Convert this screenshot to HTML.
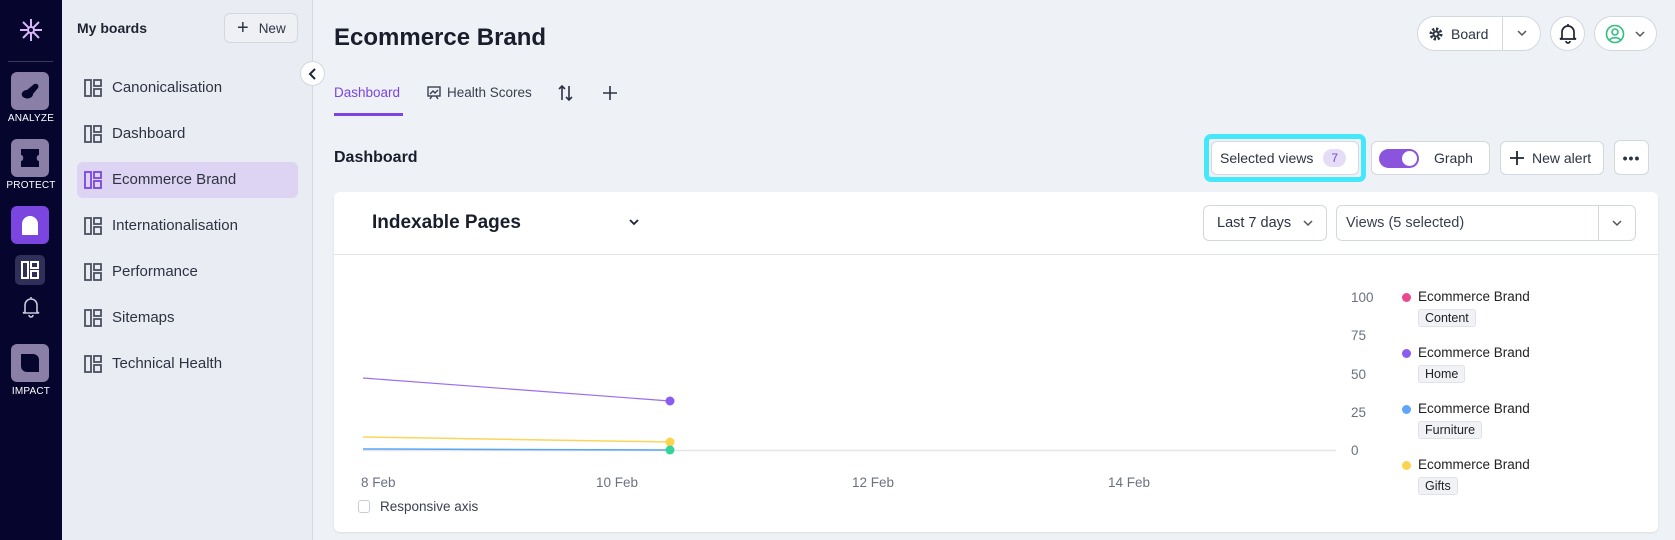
<!DOCTYPE html>
<html><head><meta charset="utf-8"><style>
*{box-sizing:border-box;margin:0;padding:0}
body{width:1675px;height:540px;overflow:hidden;background:#eef1f6;font-family:"Liberation Sans",sans-serif;color:#1f2433;position:relative}
.a{position:absolute}
.nav{left:0;top:0;width:62px;height:540px;background:#05052e}
.nb{position:absolute;left:11px;width:38px;height:38px;border-radius:6px;background:#8a7fa6}
.nl{position:absolute;left:0;width:62px;text-align:center;color:#fff;font-size:10px;letter-spacing:.2px}
.side{left:62px;top:0;width:251px;height:540px;background:#e9ecf2;border-right:1px solid #d5d9e2}
.item{position:absolute;left:15px;width:221px;height:36px;border-radius:6px;font-size:15px;color:#2d3342;line-height:36px;padding-left:35px}
.item svg{position:absolute;left:7px;top:9px}
.btn{position:absolute;background:#fff;border:1px solid #d3d7df;border-radius:6px;font-size:15px;color:#2d3342;display:flex;align-items:center}
.tag{display:inline-block;background:#f1f2f5;border:1px solid #e0e2e7;border-radius:3px;font-size:12.5px;padding:1px 6px;color:#222}
.leg{position:absolute;left:1402px;font-size:13.5px;color:#222}
.leg i{position:absolute;left:0;top:4px;width:9px;height:9px;border-radius:50%}
.leg span.t{position:absolute;left:16px;top:0;white-space:nowrap}
.leg .tag{position:absolute;left:16px;top:20px;white-space:nowrap}
.yl{position:absolute;left:1351px;font-size:13.5px;color:#6b7180}
.xl{position:absolute;top:475px;font-size:13.5px;color:#6b7180}
</style></head><body>
<div class="a nav">
  <svg class="a" style="left:19px;top:18px" width="24" height="24" viewBox="0 0 24 24" fill="none" stroke="#d6b6f7" stroke-width="2"><path d="M12 1v22M1 12h22M4 4l16 16M20 4L4 20"/><circle cx="12" cy="12" r="3" fill="#05052e" stroke="#d6b6f7"/></svg>
  <div class="a" style="left:8px;top:61px;width:45px;height:1px;background:#3a3a5c"></div>
  <div class="nb" style="top:72px"><svg width="38" height="38" viewBox="0 0 38 38"><path d="M12 25c-3-3 0-7 4-7l6-5c3-3 7 0 5 3l-5 6c0 4-6 6-10 3z" fill="#05052e"/></svg></div>
  <div class="nl" style="top:113px">ANALYZE</div>
  <div class="nb" style="top:139px"><svg width="38" height="38" viewBox="0 0 38 38"><path d="M10 10h18v6c-3 0-3 6 0 6v6H10v-6c3 0 3-6 0-6z" fill="#05052e"/></svg></div>
  <div class="nl" style="top:180px">PROTECT</div>
  <div class="nb" style="top:206px;background:#7b45e0"><svg width="38" height="38" viewBox="0 0 38 38"><path d="M11 29V18a8 8 0 0 1 16 0v11z" fill="#fff"/></svg></div>
  <div class="a" style="left:15px;top:255px;width:30px;height:30px;border-radius:5px;background:#2f2f5a"><svg style="margin:6px" width="18" height="18" viewBox="0 0 18 18" fill="none" stroke="#fff" stroke-width="2"><rect x="1" y="1" width="6" height="16"/><rect x="10" y="1" width="7" height="6"/><rect x="10" y="10" width="7" height="7"/></svg></div>
  <svg class="a" style="left:21px;top:296px" width="20" height="22" viewBox="0 0 20 22" fill="none" stroke="#c8c8d8" stroke-width="1.6"><path d="M4 16V9a6 6 0 0 1 12 0v7l2 1H2z M8 19a2 2 0 0 0 4 0 M10 1v2"/></svg>
  <div class="nb" style="top:344px"><svg width="38" height="38" viewBox="0 0 38 38"><path d="M10 10h12a6 6 0 0 1 6 6v12H16a6 6 0 0 1-6-6z" fill="#05052e"/></svg></div>
  <div class="nl" style="top:386px">IMPACT</div>
</div>
<div class="a side">
  <div class="a" style="left:15px;top:20px;font-size:14px;font-weight:bold;color:#1f2433">My boards</div>
  <div class="btn" style="left:162px;top:13px;width:74px;height:30px;background:#eef0f4;font-size:13.5px;padding-left:12px"><span style="font-size:20px;font-weight:300;margin-right:10px">+</span>New</div>
  <div class="item" style="top:70px">
    <svg width="18" height="18" viewBox="0 0 18 18" fill="none" stroke="#4a5060" stroke-width="1.8"><rect x="1" y="1" width="6" height="16"/><rect x="10" y="1" width="7" height="6"/><rect x="10" y="10" width="7" height="7"/></svg>Canonicalisation</div>
  <div class="item" style="top:116px"><svg width="18" height="18" viewBox="0 0 18 18" fill="none" stroke="#4a5060" stroke-width="1.8"><rect x="1" y="1" width="6" height="16"/><rect x="10" y="1" width="7" height="6"/><rect x="10" y="10" width="7" height="7"/></svg>Dashboard</div>
  <div class="item" style="top:162px;background:#ddd3f3"><svg width="18" height="18" viewBox="0 0 18 18" fill="none" stroke="#7b45e0" stroke-width="1.8"><rect x="1" y="1" width="6" height="16"/><rect x="10" y="1" width="7" height="6"/><rect x="10" y="10" width="7" height="7"/></svg>Ecommerce Brand</div>
  <div class="item" style="top:208px"><svg width="18" height="18" viewBox="0 0 18 18" fill="none" stroke="#4a5060" stroke-width="1.8"><rect x="1" y="1" width="6" height="16"/><rect x="10" y="1" width="7" height="6"/><rect x="10" y="10" width="7" height="7"/></svg>Internationalisation</div>
  <div class="item" style="top:254px"><svg width="18" height="18" viewBox="0 0 18 18" fill="none" stroke="#4a5060" stroke-width="1.8"><rect x="1" y="1" width="6" height="16"/><rect x="10" y="1" width="7" height="6"/><rect x="10" y="10" width="7" height="7"/></svg>Performance</div>
  <div class="item" style="top:300px"><svg width="18" height="18" viewBox="0 0 18 18" fill="none" stroke="#4a5060" stroke-width="1.8"><rect x="1" y="1" width="6" height="16"/><rect x="10" y="1" width="7" height="6"/><rect x="10" y="10" width="7" height="7"/></svg>Sitemaps</div>
  <div class="item" style="top:346px"><svg width="18" height="18" viewBox="0 0 18 18" fill="none" stroke="#4a5060" stroke-width="1.8"><rect x="1" y="1" width="6" height="16"/><rect x="10" y="1" width="7" height="6"/><rect x="10" y="10" width="7" height="7"/></svg>Technical Health</div>
</div>
<div class="a" style="left:300px;top:61px;width:25px;height:25px;border-radius:50%;background:#fff;border:1px solid #d3d7df"><svg style="margin:6px 0 0 6px" width="12" height="12" viewBox="0 0 12 12" fill="none" stroke="#1f2433" stroke-width="2"><path d="M8 1L3 6l5 5"/></svg></div>

<div class="a" style="left:334px;top:24px;font-size:24px;font-weight:bold;color:#1a1e2c">Ecommerce Brand</div>
<div class="a" style="left:334px;top:85px;font-size:13.5px;color:#7b45e0">Dashboard</div>
<div class="a" style="left:334px;top:113px;width:69px;height:3px;background:#7b45e0"></div>
<svg class="a" style="left:427px;top:86px" width="14" height="14" viewBox="0 0 14 14" fill="none" stroke="#3a4050" stroke-width="1.4"><rect x="1" y="1" width="12" height="9"/><path d="M3 8l3-3 2 2 3-3M5 10l-2 3M9 10l2 3"/></svg>
<div class="a" style="left:447px;top:85px;font-size:13.5px;color:#3a4050">Health Scores</div>
<svg class="a" style="left:557px;top:84px" width="18" height="18" viewBox="0 0 18 18" fill="none" stroke="#2d3342" stroke-width="1.6"><path d="M5 16V2M2 5l3-3 3 3M12 2v14M9 13l3 3 3-3"/></svg>
<svg class="a" style="left:602px;top:85px" width="16" height="16" viewBox="0 0 16 16" stroke="#2d3342" stroke-width="1.6"><path d="M8 1v14M1 8h14"/></svg>
<div class="a" style="left:334px;top:149px;font-size:16px;font-weight:bold;color:#1a1e2c">Dashboard</div>

<div class="btn" style="left:1417px;top:16px;width:124px;height:35px;border-radius:18px;font-size:14px">
 <svg style="margin:0 8px 0 11px" width="14" height="14" viewBox="0 0 14 14"><circle cx="7" cy="7" r="5" fill="none" stroke="#2d3342" stroke-width="3" stroke-dasharray="2.3 1.6"/><circle cx="7" cy="7" r="3.5" fill="#2d3342"/><circle cx="7" cy="7" r="1.5" fill="#fff"/></svg>Board
 <div style="position:absolute;left:84px;top:0;width:1px;height:33px;background:#d3d7df"></div>
 <svg style="position:absolute;left:98px;top:12px" width="12" height="8" viewBox="0 0 12 8" fill="none" stroke="#555" stroke-width="1.5"><path d="M2 2l4 4 4-4"/></svg></div>
<div class="btn" style="left:1550px;top:16px;width:35px;height:35px;border-radius:50%"><svg style="margin-left:8px" width="18" height="20" viewBox="0 0 18 20" fill="none" stroke="#1f2433" stroke-width="1.7"><path d="M3 14V8a6 6 0 0 1 12 0v6l2 1H1z M7 17a2 2 0 0 0 4 0 M9 0v2"/></svg></div>
<div class="btn" style="left:1594px;top:16px;width:63px;height:35px;border-radius:18px"><svg style="margin-left:10px" width="20" height="20" viewBox="0 0 20 20" fill="none" stroke="#2fbf7f" stroke-width="1.6"><circle cx="10" cy="10" r="8.5"/><circle cx="10" cy="8" r="3"/><path d="M4.5 16c2-3 9-3 11 0"/></svg><svg style="margin-left:9px" width="12" height="8" viewBox="0 0 12 8" fill="none" stroke="#555" stroke-width="1.5"><path d="M2 2l4 4 4-4"/></svg></div>

<div class="a" style="left:1204px;top:134px;width:162px;height:48px;border:5px solid #45e8fb;border-radius:7px"></div>
<div class="btn" style="left:1211px;top:141px;width:148px;height:34px;font-size:14px;padding-left:8px">Selected views<span style="margin-left:10px;background:#e5dcf6;color:#7b45e0;border-radius:10px;font-size:12px;padding:2px 8px">7</span></div>
<div class="btn" style="left:1371px;top:141px;width:119px;height:34px;font-size:14px"><span style="margin-left:7px;width:40px;height:19px;border-radius:10px;background:#8a55dc;position:relative;display:inline-block"><span style="position:absolute;right:2px;top:2px;width:15px;height:15px;border-radius:50%;background:#fff"></span></span><span style="margin-left:15px">Graph</span></div>
<div class="btn" style="left:1500px;top:141px;width:104px;height:34px;font-size:14px"><svg style="margin:0 8px 0 9px" width="14" height="14" viewBox="0 0 14 14" stroke="#1f2433" stroke-width="1.8"><path d="M7 0v14M0 7h14"/></svg>New alert</div>
<div class="btn" style="left:1614px;top:140px;width:35px;height:35px;justify-content:center;font-weight:bold;letter-spacing:1px;font-size:14px">•••</div>

<div class="a" style="left:334px;top:192px;width:1324px;height:340px;background:#fff;border-radius:6px;box-shadow:0 1px 2px rgba(0,0,0,.08)">
  <div class="a" style="left:38px;top:20px;font-size:19px;font-weight:bold;color:#1a1e2c">Indexable Pages</div>
  <svg class="a" style="left:294px;top:26px" width="12" height="8" viewBox="0 0 12 8" fill="none" stroke="#1f2433" stroke-width="1.8"><path d="M2 2l4 4 4-4"/></svg>
  <div class="btn" style="left:869px;top:13px;width:124px;height:36px;font-size:14.5px;padding-left:13px">Last 7 days<svg style="margin-left:11px" width="12" height="8" viewBox="0 0 12 8" fill="none" stroke="#555" stroke-width="1.5"><path d="M2 2l4 4 4-4"/></svg></div>
  <div class="btn" style="left:1002px;top:13px;width:300px;height:36px;font-size:14.5px;padding-left:9px;color:#3a4050">Views (5 selected)<div style="position:absolute;left:261px;top:0;width:1px;height:34px;background:#d3d7df"></div><svg style="position:absolute;left:274px;top:13px" width="12" height="8" viewBox="0 0 12 8" fill="none" stroke="#555" stroke-width="1.5"><path d="M2 2l4 4 4-4"/></svg></div>
  <div class="a" style="left:0;top:62px;width:1324px;height:1px;background:#e3e5ea"></div>
</div>
<svg class="a" style="left:0;top:0" width="1675" height="540">
  <line x1="363" y1="450.5" x2="1336" y2="450.5" stroke="#e3e5ea" stroke-width="1.5"/>
  <line x1="363" y1="378" x2="670" y2="401" stroke="#9b6cf0" stroke-width="1.2"/>
  <line x1="363" y1="437" x2="670" y2="442" stroke="#fcd55a" stroke-width="1.5"/>
  <line x1="363" y1="449" x2="670" y2="450" stroke="#5aa5f2" stroke-width="1.5"/>
  <circle cx="670" cy="401" r="4.5" fill="#8b5cf0"/>
  <circle cx="670" cy="442" r="4.5" fill="#fcd34d"/>
  <circle cx="670" cy="450" r="4.5" fill="#34d399"/>
</svg>
<div class="yl" style="top:290px">100</div>
<div class="yl" style="top:328px">75</div>
<div class="yl" style="top:367px">50</div>
<div class="yl" style="top:405px">25</div>
<div class="yl" style="top:443px">0</div>
<div class="xl" style="left:361px">8 Feb</div>
<div class="xl" style="left:596px">10 Feb</div>
<div class="xl" style="left:852px">12 Feb</div>
<div class="xl" style="left:1108px">14 Feb</div>
<div class="a" style="left:358px;top:500px;width:12px;height:13px;border:1px solid #c9ccd3;border-radius:3px"></div>
<div class="a" style="left:380px;top:499px;font-size:13.5px;color:#3a4050">Responsive axis</div>
<div class="leg" style="top:289px"><i style="background:#ec4890"></i><span class="t">Ecommerce Brand</span><span class="tag">Content</span></div>
<div class="leg" style="top:345px"><i style="background:#8b5cf0"></i><span class="t">Ecommerce Brand</span><span class="tag">Home</span></div>
<div class="leg" style="top:401px"><i style="background:#60a5fa"></i><span class="t">Ecommerce Brand</span><span class="tag">Furniture</span></div>
<div class="leg" style="top:457px"><i style="background:#fcd34d"></i><span class="t">Ecommerce Brand</span><span class="tag">Gifts</span></div>
</body></html>
